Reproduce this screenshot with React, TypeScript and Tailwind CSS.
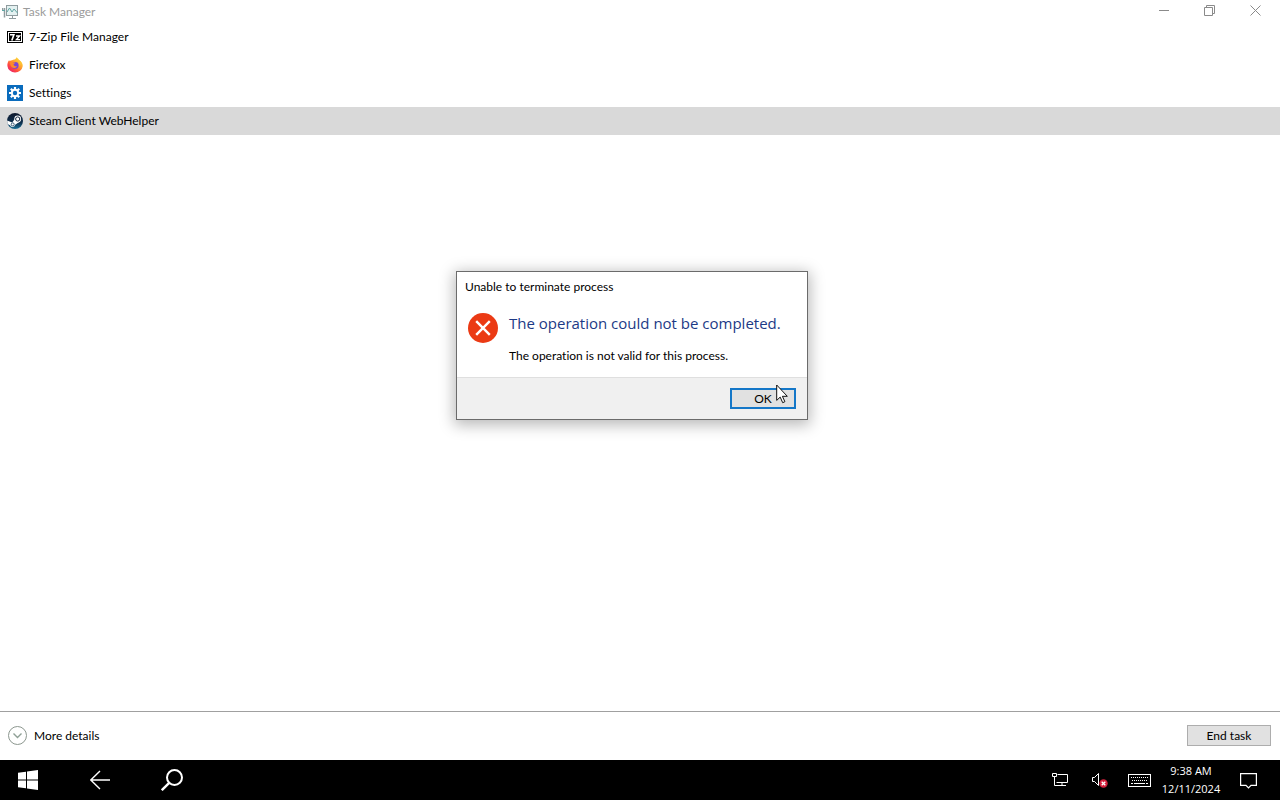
import type { ReactNode } from "react";

interface Task {
  id: string;
  name: string;
  icon: ReactNode;
}

const SevenZipIcon = () => (
  <svg viewBox="0 0 16 16" className="size-4" aria-hidden="true">
    <rect x="0" y="2" width="16" height="12" fill="#000" />
    <rect x="1.5" y="3.5" width="13" height="9" fill="#000" stroke="#fff" />
    <path d="M3 5.700h3.900L4.800 11.500" fill="none" stroke="#fff" strokeWidth="1.6" />
    <path d="M9 7h3.600l-3.200 3.700h3.600" fill="none" stroke="#fff" strokeWidth="1.3" />
  </svg>
);

const FirefoxIcon = () => (
  <svg viewBox="0 0 16 16" className="size-4" aria-hidden="true">
    <defs>
      <linearGradient id="fox" x1="0.85" y1="0.1" x2="0.15" y2="0.95">
        <stop offset="0" stopColor="#ffe23e" />
        <stop offset="0.4" stopColor="#ff9a2e" />
        <stop offset="0.7" stopColor="#ff4a3f" />
        <stop offset="1" stopColor="#e8206f" />
      </linearGradient>
    </defs>
    <path
      d="M9.4 0.3c1.5 1 2.4 2 2.9 3.1 1 .3 1.8 1 2.4 2.1.8 1.3 1.1 2.4 1 3.7A7.7 7.2 0 0 1 .4 9C.2 6.6.9 4.6 2.2 3l.3 1.3c.8-.7 1.6-1 2.6-1.1C6 2.8 6.7 2.5 7.3 2.6 8.4 2.3 9.2 1.5 9.4.3z"
      fill="url(#fox)"
    />
    <circle cx="8.2" cy="8.4" r="3.4" fill="#7a45d8" />
    <path d="M3 5.200c1.200-.6 2.500-.4 3.400.3h2.100c-.2.900-1.500 1.200-2 1.700.3 1.700 1.900 2.400 3.600 1.700-1 2.700-5 2.700-6.200.1C3.300 7.800 3 6.500 3 5.200z" fill="#ff8a2a" />
    <path d="M9.500 2.500c2.500 1.500 3.500 4 2.600 6.500 1.500-.6 2.300-2 2.200-3.700-.7-1.600-2.300-2.800-4.800-2.800z" fill="#ffc233" />
  </svg>
);

const SettingsIcon = () => (
  <svg viewBox="0 0 16 16" className="size-4" aria-hidden="true">
    <rect width="16" height="16" fill="#0a6cbd" />
    <path d="M8 2v12M2 8h12M3.800 3.800l8.400 8.400M12.200 3.800l-8.400 8.400" stroke="#fff" strokeWidth="2.2" />
    <circle cx="8" cy="8" r="4.2" fill="#fff" />
    <circle cx="8" cy="8" r="2.2" fill="#0a6cbd" />
  </svg>
);

const SteamIcon = () => (
  <svg viewBox="0 0 16 16" className="size-4" aria-hidden="true">
    <defs>
      <linearGradient id="steam" x1="0" y1="0" x2="0" y2="1">
        <stop offset="0" stopColor="#10192e" />
        <stop offset="0.6" stopColor="#0d2f4d" />
        <stop offset="1" stopColor="#1a6f96" />
      </linearGradient>
    </defs>
    <circle cx="8" cy="8" r="8" fill="url(#steam)" />
    <path d="M.1 7.400 5.200 9.500 8 5.800l4.200 3.200-4 2.700a2.700 2.700 0 0 1-5.200.5L.5 10.900z" fill="#fff" />
    <circle cx="5.700" cy="11.400" r="1.500" fill="none" stroke="#123a5a" strokeWidth="0.8" />
    <circle cx="10.700" cy="6" r="3.400" fill="#fff" />
    <circle cx="10.700" cy="6" r="2.100" fill="#fff" stroke="#10233d" strokeWidth="1" />
  </svg>
);

const TaskManagerIcon = () => (
  <svg viewBox="0 0 17 16" className="h-4 w-[17px]" fill="none" aria-hidden="true">
    <rect x="4.5" y="1.5" width="11" height="10" fill="#e4f1f1" stroke="#8f9c9f" />
    <path d="M5 8l2.500-4 2.500 4 2-3 3.500 4" stroke="#5fa5a3" />
    <path d="M10.500 12v2M7 14.500h7" stroke="#8f9c9f" />
    <path d="M.5 4v3M2.500 4v9.500" stroke="#8f9c9f" strokeWidth="1.5" />
    <path d="M0 6.500h3" stroke="#5fa5a3" />
  </svg>
);

const tasks: Task[] = [
  { id: "7zip", name: "7-Zip File Manager", icon: <SevenZipIcon /> },
  { id: "firefox", name: "Firefox", icon: <FirefoxIcon /> },
  { id: "settings", name: "Settings", icon: <SettingsIcon /> },
  { id: "steam", name: "Steam Client WebHelper", icon: <SteamIcon /> },
];

const selectedId = "steam";

function TitleBar() {
  return (
    <header className="flex h-[23px] shrink-0 items-start justify-between">
      <div className="flex h-full items-center gap-1 pl-0.5 text-[#9b9b9b]">
        <TaskManagerIcon />
        <h1>Task Manager</h1>
      </div>
      <div className="flex h-[21px] pr-0.5 text-[#8a8a8a]">
        <button aria-label="Minimize" className="flex w-[46px] items-center justify-center">
          <svg viewBox="0 0 11 11" className="size-[11px]" fill="none" stroke="currentColor">
            <path d="M1 5.500h10" />
          </svg>
        </button>
        <button aria-label="Restore" className="flex w-[46px] items-center justify-center">
          <svg viewBox="0 0 11 11" className="size-[11px]" fill="none" stroke="currentColor">
            <path d="M.5 2.500h8v8h-8zM2.500 2.500v-2h8v8h-2" />
          </svg>
        </button>
        <button aria-label="Close" className="flex w-[46px] items-center justify-center">
          <svg viewBox="0 0 11 11" className="size-[11px]" fill="none" stroke="currentColor">
            <path d="M.5.5l10 10M10.500.5l-10 10" />
          </svg>
        </button>
      </div>
    </header>
  );
}

function ErrorDialog() {
  return (
    <div
      role="alertdialog"
      aria-labelledby="dialog-title"
      className="absolute top-[271px] left-[456px] w-[352px] border border-[#6b6b6b] bg-white shadow-[0_3px_14px_2px_rgba(0,0,0,0.28)]"
    >
      <div id="dialog-title" className="flex h-[30px] items-center px-2">
        Unable to terminate process
      </div>
      <div className="flex h-[75px] gap-2.5 pt-2.5 pl-2.5">
        <svg viewBox="0 0 32 32" className="size-8 shrink-0" aria-hidden="true">
          <circle cx="16" cy="16" r="15" fill="#eb3a14" />
          <path d="M9.200 9.200l13.600 13.600M22.800 9.200L9.200 22.800" stroke="#fff" strokeWidth="2.4" />
        </svg>
        <div className="flex flex-col gap-3.5">
          <p className="font-['Open_Sans',sans-serif] text-[15px] leading-[22px] whitespace-nowrap text-[#1c3a86]">
            The operation could not be completed.
          </p>
          <p>The operation is not valid for this process.</p>
        </div>
      </div>
      <div className="flex h-[42px] items-center justify-end border-t border-[#dfdfdf] bg-[#f0f0f0] pr-[11px]">
        <div className="relative">
          <button className="block h-[21px] w-[66px] border-2 border-[#1477c8] bg-[#e1e1e1]">OK</button>
          {/* Mouse pointer */}
          <svg viewBox="0 0 12 20" className="absolute -top-1 left-[46px] h-5 w-3" aria-hidden="true">
            <path
              d="M.7 1v15.400l3.500-3.300 2.500 5.600 2.200-1-2.500-5.400h4.900z"
              fill="#fff"
              stroke="#111"
              strokeWidth="1"
            />
          </svg>
        </div>
      </div>
    </div>
  );
}

function Taskbar() {
  return (
    <nav className="flex h-10 shrink-0 items-center justify-between bg-black text-white">
      <div className="flex h-full">
        <button aria-label="Start" className="flex w-14 items-center justify-center">
          <svg viewBox="0 0 20 20" className="size-5" fill="currentColor">
            <path d="M0 2.800 8 1.700v7.800H0zM9 1.500 20 0v9.500H9zM0 10.500h8v7.800L0 17.200zM9 10.500h11V20L9 18.500z" />
          </svg>
        </button>
        <button aria-label="Back" className="flex w-[88px] items-center justify-center">
          <svg viewBox="0 0 20 20" className="size-5" fill="none" stroke="currentColor" strokeWidth="1.4">
            <path d="M20 10H.8M10 1 .8 10l9.200 9" />
          </svg>
        </button>
        <button aria-label="Search" className="flex w-14 items-center justify-center">
          <svg viewBox="0 0 22 22" className="size-[22px]" fill="none" stroke="currentColor" strokeWidth="2">
            <circle cx="13.500" cy="8.500" r="7.500" />
            <path d="M8.200 13.800.8 21.200" strokeWidth="2.4" />
          </svg>
        </button>
      </div>
      <div className="flex h-full items-center">
        <button aria-label="Network" className="flex w-10 items-center justify-center">
          <svg viewBox="0 0 16 14" className="h-3.5 w-4" fill="none" stroke="currentColor">
            <path d="M5.500 1.500h10v8h-11M10 9.500v3M6 12.500h8M.5.500h4v3h-4zM2.500 3.500v9h4" />
          </svg>
        </button>
        <button aria-label="Volume muted" className="flex w-10 items-center justify-center">
          <svg viewBox="0 0 18 16" className="h-4 w-[18px]" fill="none" stroke="currentColor">
            <path d="M1.500 5.500h2l4-4v12l-4-4h-2z" />
            <circle cx="12.500" cy="11.500" r="4.2" fill="#d3203c" stroke="none" />
            <path d="M10.700 9.700l3.600 3.600M14.300 9.700l-3.600 3.600" strokeWidth="1.3" />
          </svg>
        </button>
        <button aria-label="Touch keyboard" className="flex w-[38px] items-center justify-center">
          <svg viewBox="0 0 23 13" className="h-[13px] w-[23px]" fill="none" stroke="currentColor">
            <rect x="0.5" y="0.5" width="22" height="12" />
            <path d="M3 3.500h17M4 6.500h16" strokeDasharray="1 1" />
            <path d="M3 9.500h2M6 9.500h11M18 9.500h2" />
          </svg>
        </button>
        <button className="flex w-[66px] flex-col items-center font-['Open_Sans',sans-serif] text-[11px] leading-[18px] whitespace-nowrap">
          <span>9:38 AM</span>
          <span>12/11/2024</span>
        </button>
        <button aria-label="Notifications" className="flex w-14 items-center pl-4">
          <svg viewBox="0 0 17 17" className="size-[17px]" fill="none" stroke="currentColor" strokeWidth="1.2">
            <path d="M.6 1.600h15.800v11.800H11L8.500 16 6 13.400H.6z" />
          </svg>
        </button>
      </div>
    </nav>
  );
}

export default function App() {
  return (
    <div className="relative flex h-screen flex-col bg-white font-[Lato,sans-serif] text-[12px] leading-4 text-black [font-variant-ligatures:none]">
      <TitleBar />

      <ul className="flex-1">
        {tasks.map((t) => (
          <li key={t.id}>
            <button
              className={`flex h-7 w-full items-center gap-1.5 pl-[7px] text-left ${
                t.id === selectedId ? "bg-[#d9d9d9]" : ""
              }`}
            >
              {t.icon}
              <span>{t.name}</span>
            </button>
          </li>
        ))}
      </ul>

      <footer className="flex h-[49px] shrink-0 items-center justify-between border-t border-[#a0a0a0] pr-[9px] pb-px pl-2">
        <button className="flex items-center gap-[7px]">
          <svg viewBox="0 0 19 19" className="size-[19px]" fill="none" aria-hidden="true">
            <circle cx="9.500" cy="9.500" r="9" stroke="#8c978f" />
            <path d="M5.500 7.500l4 4 4-4" stroke="#8fa096" strokeWidth="1.4" />
          </svg>
          More details
        </button>
        <button className="h-[21px] w-[84px] border border-[#adadad] bg-[#e1e1e1]">End task</button>
      </footer>

      <Taskbar />
      <ErrorDialog />
    </div>
  );
}
